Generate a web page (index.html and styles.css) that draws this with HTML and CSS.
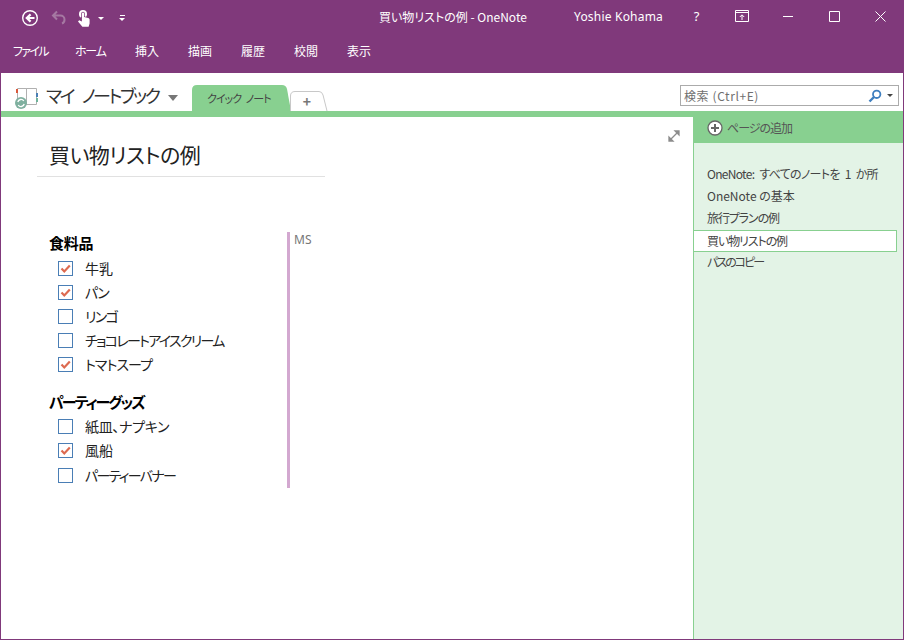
FILE: index.html
```html
<!DOCTYPE html>
<html lang="ja">
<head>
<meta charset="utf-8">
<title>買い物リストの例 - OneNote</title>
<link rel="stylesheet" href="styles.css">
</head>
<body>
<div class="window">
  <header class="titlebar">
    <div class="qat">
      <svg class="ic back" width="18" height="18" viewBox="0 0 18 18"><circle cx="9" cy="9" r="7.300" fill="none" stroke="#fff" stroke-width="1.400"/><path d="M13.500 9H6.500M9.600 5.400 5.800 9l3.800 3.600" fill="none" stroke="#fff" stroke-width="2.200"/></svg>
      <svg class="ic undo" width="16" height="16" viewBox="0 0 16 16"><path d="M6 1.500 2 5.500l4 4M2.600 5.500H9.500a4 4 0 0 1 4 4v0a4 4 0 0 1-2.500 4" fill="none" stroke="#a578a2" stroke-width="2"/></svg>
      <svg class="ic touch" width="12" height="18" viewBox="0 0 12 18"><path d="M1 5a4 4 0 0 1 8 0c0 1.300-.5 2.200-1.200 3L6.800 7V4.500a1.800 1.800 0 0 0-3.600 0V8L2.300 8.500C1.500 7.500 1 6.500 1 5z" fill="#fff"/><path d="M3.900 4.500a1.100 1.100 0 0 1 2.200 0V8l4 1.100c1 .3 1.500.9 1.500 1.900v3.500l-1 3.200H4.400L0 12.500l1.200-1.300 2.700 1.300z" fill="#fff"/></svg>
      <span class="caret touch-caret"></span>
      <span class="customize"><i></i><span class="caret"></span></span>
    </div>
    <div class="doc-title">買い物リストの例 - OneNote</div>
    <div class="user">Yoshie Kohama</div>
    <div class="controls">
      <span class="ctl help">?</span>
      <span class="ctl"><svg width="15" height="12" viewBox="0 0 15 12"><path d="M.5.500h13v11H.5zM.5 2.500h13M7 10V5M4.800 7 7 4.800 9.200 7" fill="none" stroke="#fff"/></svg></span>
      <span class="ctl"><svg width="11" height="11" viewBox="0 0 11 11"><path d="M0 5.500h10" stroke="#fff"/></svg></span>
      <span class="ctl"><svg width="11" height="11" viewBox="0 0 11 11"><path d="M.5.500h10v10H.5z" fill="none" stroke="#fff"/></svg></span>
      <span class="ctl"><svg width="11" height="11" viewBox="0 0 11 11"><path d="M.5.500l10 10M10.500.500l-10 10" fill="none" stroke="#fff"/></svg></span>
    </div>
  </header>
  <nav class="ribbon">
    <span class="tab t-file">ファイル</span>
    <span class="tab t-home">ホーム</span>
    <span class="tab">挿入</span>
    <span class="tab">描画</span>
    <span class="tab">履歴</span>
    <span class="tab">校閲</span>
    <span class="tab">表示</span>
  </nav>
  <div class="notebar">
    <svg class="nb-icon" width="25" height="24" viewBox="0 0 25 24"><path d="M3.500 2.500h9v16h-9zM12.500 2.500h10v16h-10z" fill="#fff" stroke="#b0b0b0"/><rect x="2" y="3" width="2" height="4" fill="#d9583b"/><rect x="22" y="7" width="2" height="4" fill="#4a7fb5"/><rect x="22" y="12" width="2" height="4" fill="#6fb39a"/><circle cx="7" cy="17" r="6" fill="#7fb09f"/><path d="M3.800 16a3.300 3.300 0 0 1 6-1M10.200 18a3.300 3.300 0 0 1-6 1" fill="none" stroke="#fff" stroke-width="1.300"/></svg>
    <span class="nb-name">マイ ノートブック</span>
    <span class="nb-caret"></span>
    <div class="sections">
      <span class="section active">クイック ノート</span>
      <span class="section add"><svg class="add-shape" width="38" height="20" viewBox="0 0 38 20"><path d="M.5 20V5Q.5.500 5 .500H29Q32 .500 33 4L37 20" fill="#fff" stroke="#c8c8c8"/></svg><span class="plus">+</span></span>
    </div>
    <div class="search">
      <span class="search-text">検索 (Ctrl+E)</span>
      <svg width="14" height="14" viewBox="0 0 14 14"><circle cx="8.700" cy="5.300" r="3.700" fill="none" stroke="#3f7fbf" stroke-width="1.800"/><path d="M6 8 1.500 12.500" stroke="#3f7fbf" stroke-width="2.400"/></svg>
      <span class="search-caret"></span>
    </div>
  </div>
  <div class="strip"></div>
  <main class="body">
    <section class="page">
      <svg class="expand" width="12" height="12" viewBox="0 0 12 12"><path d="M7 1h4v4zM1 11V7l4 4zM9.500 2.500l-7 7" fill="#8c8c8c" stroke="#8c8c8c" stroke-width="1.300"/></svg>
      <h1 class="page-title">買い物リストの例</h1>
      <div class="note">
        <div class="lists">
          <h2 class="group g-first">食料品</h2>
          <ul class="items">
            <li class="item"><span class="box"><svg class="tick" width="13" height="13" viewBox="0 0 13 13"><path d="M2.500 6.500 5.300 9.500 10.800 3.500" fill="none" stroke="#dd6a50" stroke-width="2.200"/></svg></span>牛乳</li>
            <li class="item tight"><span class="box"><svg class="tick" width="13" height="13" viewBox="0 0 13 13"><path d="M2.500 6.500 5.300 9.500 10.800 3.500" fill="none" stroke="#dd6a50" stroke-width="2.200"/></svg></span>パン</li>
            <li class="item tight"><span class="box"></span>リンゴ</li>
            <li class="item tight"><span class="box"></span>チョコレートアイスクリーム</li>
            <li class="item mid"><span class="box"><svg class="tick" width="13" height="13" viewBox="0 0 13 13"><path d="M2.500 6.500 5.300 9.500 10.800 3.500" fill="none" stroke="#dd6a50" stroke-width="2.200"/></svg></span>トマトスープ</li>
          </ul>
          <h2 class="group second">パーティーグッズ</h2>
          <ul class="items">
            <li class="item slight"><span class="box"></span>紙皿、ナプキン</li>
            <li class="item"><span class="box"><svg class="tick" width="13" height="13" viewBox="0 0 13 13"><path d="M2.500 6.500 5.300 9.500 10.800 3.500" fill="none" stroke="#dd6a50" stroke-width="2.200"/></svg></span>風船</li>
            <li class="item tight last"><span class="box"></span>パーティーバナー</li>
          </ul>
        </div>
        <div class="author">MS</div>
      </div>
    </section>
    <aside class="side">
      <div class="add-page">
        <svg width="16" height="16" viewBox="0 0 16 16"><circle cx="8" cy="8" r="7" fill="#fff" stroke="#666" stroke-width="1.300"/><path d="M8 4v8M4 8h8" stroke="#666" stroke-width="2"/></svg>
        <span class="add-label">ページの追加</span>
      </div>
      <ul class="pages">
        <li class="pg p-long">OneNote: すべてのノートを 1 か所</li>
        <li class="pg">OneNote の基本</li>
        <li class="pg p-mid">旅行プランの例</li>
        <li class="pg p-mid current">買い物リストの例</li>
        <li class="pg p-tight">パスのコピー</li>
      </ul>
    </aside>
  </main>
</div>
</body>
</html>
```
FILE: styles.css
```css
* { box-sizing: border-box; }
html, body { margin: 0; height: 100%; }
body {
  font-family: "Noto Sans CJK JP", "Noto Sans", sans-serif;
  font-feature-settings: "palt";
  background: #fff;
  overflow: hidden;
}
.window {
  width: 904px;
  height: 640px;
  display: flex;
  flex-direction: column;
  border: 1px solid #80397b;
  border-top: 0;
}
.titlebar {
  height: 36px;
  margin: 0 -1px;
  background: #80397b;
  color: #fff;
  display: flex;
  align-items: center;
  position: relative;
  font-size: 12px;
}
.qat { display: flex; align-items: center; padding-left: 21px; }
.ic { display: block; }
.undo { margin-left: 12px; }
.touch { margin-left: 11px; }
.caret {
  display: block;
  width: 0; height: 0;
  border: 3px solid transparent;
  border-top: 3px solid #fff;
  border-bottom: 0;
}
.touch-caret { margin-left: 8px; }
.customize { margin-left: 15px; display: flex; flex-direction: column; gap: 2px; align-items: center; }
.customize i { display: block; width: 5px; height: 1px; background: #fff; }
.doc-title { position: absolute; left: 379px; top: 9px; line-height: 16px; white-space: nowrap; }
.user { position: absolute; left: 574px; top: 9px; line-height: 16px; font-family: "Noto Sans", sans-serif; letter-spacing: .2px; white-space: nowrap; }
.controls { position: absolute; right: 0; top: 0; height: 36px; display: flex; left: 673px; }
.ctl { width: 46px; display: flex; align-items: center; justify-content: center; height: 32px; padding-left: 1px; }
.help { font-family: "Noto Sans", sans-serif; font-size: 13px; }
.ribbon {
  height: 37px;
  margin: 0 -1px;
  background: #80397b;
  color: #fff;
  display: flex;
  align-items: flex-start;
  padding: 6px 0 0 13px;
  font-size: 12px;
  line-height: 17px;
}
.tab { width: 53px; white-space: nowrap; }
.t-file { width: 62px; letter-spacing: -1.700px; }
.t-home { width: 60px; letter-spacing: -1.200px; }
.notebar {
  height: 38px;
  display: flex;
  align-items: flex-end;
  position: relative;
  background: #fff;
}
.nb-icon { margin: 0 0 1px 13px; }
.nb-name { margin: 0 0 3px 7px; font-size: 18px; line-height: 26px; letter-spacing: -2.500px; word-spacing: 7px; color: #333; white-space: nowrap; width: 116px; }
.nb-caret {
  margin: 0 0 10px 6px;
  border: 5px solid transparent;
  border-top: 6px solid #777;
  border-bottom: 0;
}
.sections { display: flex; align-items: flex-end; margin-left: 14px; height: 26px; }
.section { display: block; }
.section.active {
  width: 99px;
  height: 26px;
  background: #88d090;
  clip-path: path("M0 26V5Q0 0 5 0H90Q94 0 95 4L99 26Z");
  font-size: 11px;
  line-height: 27px;
  letter-spacing: -1px;
  word-spacing: 3px;
  padding-left: 15px;
  color: #444;
}
.section.add {
  width: 38px;
  height: 20px;
  margin-left: -1px;
  position: relative;
}
.add-shape { position: absolute; left: 0; top: 0; }
.plus {
  position: absolute;
  left: 0; top: 0;
  width: 34px;
  font-size: 14px;
  font-weight: 700;
  line-height: 20px;
  text-align: center;
  color: #777;
}
.search {
  position: absolute;
  left: 679px;
  top: 12px;
  width: 219px;
  height: 21px;
  border: 1px solid #ababab;
  display: flex;
  align-items: center;
  padding: 0 5px 0 3px;
  font-size: 12px;
  letter-spacing: .600px;
  color: #6f6f6f;
}
.search-text { flex: 1; }
.search-caret {
  margin-left: 5px;
  border: 3px solid transparent;
  border-top: 3px solid #444;
  border-bottom: 0;
}
.strip { height: 6px; background: #88d090; }
.body { flex: 1; display: flex; min-height: 0; }
.page { flex: 1; position: relative; padding: 0 0 0 36px; }
.expand { position: absolute; left: 667px; top: 13px; }
.page-title {
  width: 288px;
  margin: 0;
  height: 60px;
  padding: 22px 0 0 12px;
  border-bottom: 1px solid #e1e1e1;
  font-size: 21px;
  line-height: 30px;
  letter-spacing: -.500px;
  font-weight: 400;
  color: #222;
}
.note { display: flex; margin: 55px 0 0 12px; }
.lists { width: 241px; border-right: 3px solid #d3a8d0; height: 256px; }
.group { margin: 2px 0 0; font-size: 15px; line-height: 20px; font-weight: 700; letter-spacing: -1.900px; color: #000; }
.group.g-first { letter-spacing: -.300px; margin-top: 1px; }
.group.second { margin-top: 16px; }
.items { list-style: none; margin: 2px 0 0; padding: 0 0 0 9px; }
.g-first + .items { margin-top: 3px; }
.item { height: 24px; display: flex; align-items: center; font-size: 14px; color: #222; white-space: nowrap; }
.item.tight { letter-spacing: -1.700px; }
.item.mid { letter-spacing: -.900px; }
.item.slight { letter-spacing: -.300px; }
.item.last { margin-top: 1px; }
.box {
  width: 15px; height: 15px;
  margin-right: 12px;
  border: 1px solid #4a7eb5;
  flex: none;
}
.tick { display: block; }
.author { margin-left: 4px; font-family: "Noto Sans", sans-serif; font-size: 12px; line-height: 16px; color: #777; }
.side { width: 210px; background: #e3f3e6; border-left: 1px solid #88d090; flex: none; }
.add-page {
  height: 26px;
  margin-left: -1px;
  background: #88d090;
  display: flex;
  align-items: center;
  gap: 4px;
  padding-left: 14px;
  font-size: 12px;
  color: #555;
}
.add-label { letter-spacing: -1px; position: relative; top: -3px; }
.add-page svg { position: relative; top: -2px; }
.pages { list-style: none; margin: 20px 0 0; padding: 0; }
.pg { height: 22px; line-height: 22px; padding-left: 13px; font-size: 12px; color: #444; white-space: nowrap; }
.p-long { letter-spacing: -.700px; word-spacing: 3px; }
.p-mid { letter-spacing: -1.100px; }
.p-tight { letter-spacing: -2px; }
.pg.current { width: 204px; margin: 1px 0 -1px -1px; padding-left: 13px; background: #fff; border: 1px solid #88d090; line-height: 20px; }
```
